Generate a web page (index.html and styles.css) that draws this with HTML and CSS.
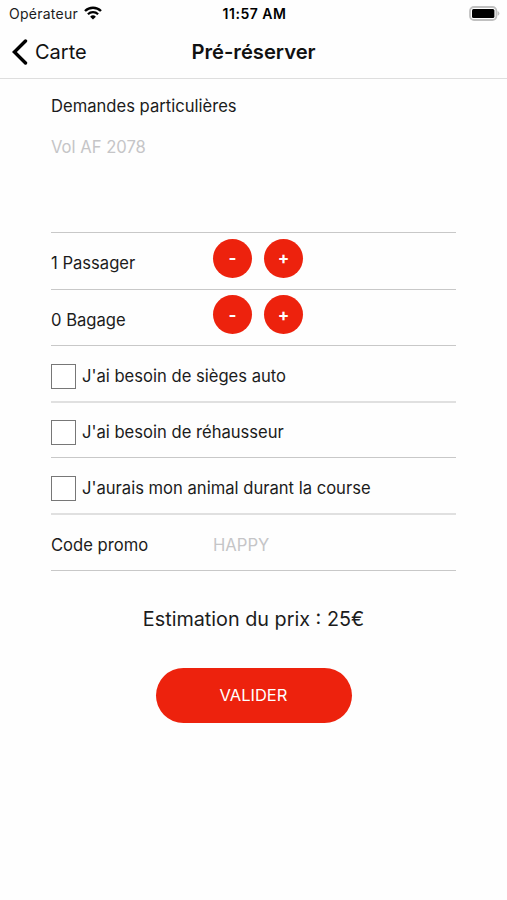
FILE: index.html
```html
<!DOCTYPE html>
<html lang="fr">
<head>
    <meta charset="UTF-8">
    <meta name="viewport" content="width=device-width, initial-scale=1.0">
    <title>Pré-réserver</title>
    <link rel="stylesheet" href="styles.css">
</head>
<body>
    <div class="status-bar">
        <div class="carrier">
            <span>Opérateur</span>
            <svg class="wifi" width="18" height="14" viewBox="0 0 18 14">
                <path d="M1 5 A11.5 11.5 0 0 1 17 5" fill="none" stroke="#000" stroke-width="2.4"/>
                <path d="M3.9 8.2 A7.3 7.3 0 0 1 14.1 8.2" fill="none" stroke="#000" stroke-width="2.2"/>
                <path d="M9 13.6 L6.1 10.7 A4.2 4.2 0 0 1 11.9 10.7 Z"/>
            </svg>
        </div>
        <span class="time">11:57 AM</span>
        <svg class="battery" width="31" height="15" viewBox="0 0 31 15">
            <rect x="1" y="1" width="26.4" height="13" rx="4" fill="#fff" stroke="#c0c0c0" stroke-width="1.8"/>
            <rect x="3" y="3" width="22.4" height="9" rx="1.5"/>
            <path d="M28.6 5 Q30.4 5.6 30.4 7.4 Q30.4 9.2 28.6 9.8 Z" fill="#c0c0c0"/>
        </svg>
    </div>
    <header class="nav-bar">
        <a class="back">
            <svg width="16" height="26" viewBox="0 0 16 26">
                <path d="M13.5 2 L2.4 13 L13.5 24" fill="none" stroke="#000" stroke-width="3.4" stroke-linecap="round"/>
            </svg>
            <span>Carte</span>
        </a>
        <h1>Pré-réserver</h1>
    </header>

    <form class="booking">
        <div class="requests">
            <label for="requests">Demandes particulières</label>
            <textarea id="requests" placeholder="Vol AF 2078"></textarea>
        </div>
        <div class="row tall">
            <span class="label">1 Passager</span>
            <div class="counter">
                <button type="button" class="round">-</button>
                <button type="button" class="round">+</button>
            </div>
        </div>
        <div class="row">
            <span class="label">0 Bagage</span>
            <div class="counter">
                <button type="button" class="round">-</button>
                <button type="button" class="round">+</button>
            </div>
        </div>
        <label class="row soft">
            <input type="checkbox">
            <span>J'ai besoin de sièges auto</span>
        </label>
        <label class="row">
            <input type="checkbox">
            <span>J'ai besoin de réhausseur</span>
        </label>
        <label class="row soft">
            <input type="checkbox">
            <span>J'aurais mon animal durant la course</span>
        </label>
        <div class="row promo">
            <label class="label" for="promo">Code promo</label>
            <input type="text" id="promo" placeholder="HAPPY">
        </div>
        <p class="estimate">Estimation du prix : 25€</p>
        <button type="button" class="submit">VALIDER</button>
    </form>
</body>
</html>
```
FILE: styles.css
```css
* {
    box-sizing: border-box;
}
body {
    font-family: Inter, sans-serif;
    font-size: 16.6px;
    background-color: #fefefe;
    color: #1c1c1c;
    margin: 0;
    height: 900px;
    overflow: hidden;
}
.status-bar {
    display: grid;
    grid-template-columns: 1fr auto 1fr;
    align-items: center;
    height: 26px;
    padding: 0 7px 0 9px;
    font-size: 14px;
}
.carrier {
    display: flex;
    align-items: center;
    gap: 6px;
    letter-spacing: 0.25px;
}
.time {
    font-weight: 600;
    color: #000;
    letter-spacing: 0.5px;
}
.battery {
    justify-self: end;
}
.nav-bar {
    display: grid;
    grid-template-columns: 1fr auto 1fr;
    align-items: center;
    height: 53px;
    padding: 0 12px 1px;
    border-bottom: 1px solid #dedede;
    color: #111;
}
.back {
    display: flex;
    align-items: center;
    gap: 7px;
    font-size: 20px;
}
h1 {
    margin: 0 0 1px;
    font-size: 20.2px;
    font-weight: 600;
}
.booking {
    width: 405px;
    margin: 0 auto;
}
.requests {
    height: 154px;
    padding-top: 17px;
    border-bottom: 1px solid #c8c8c8;
}
.requests label {
    display: block;
    line-height: 20px;
}
textarea {
    display: block;
    width: 100%;
    height: 80px;
    margin-top: 21px;
    padding: 0;
    border: none;
    outline: none;
    resize: none;
    background: transparent;
    font: inherit;
    line-height: 20px;
}
::placeholder {
    color: #c5c5c7;
    opacity: 1;
}
.row {
    display: flex;
    align-items: center;
    height: 56px;
    padding-top: 4px;
    border-bottom: 1px solid #c8c8c8;
}
.row.tall {
    height: 57px;
}
.row.soft {
    height: 57px;
    padding-top: 5px;
    border-bottom: 2px solid #e0e0e0;
}
.row.soft + .row {
    height: 55px;
}
.row.soft + .row.promo {
    height: 56px;
}
.label {
    width: 162px;
}
.counter {
    display: flex;
    gap: 12px;
    margin-top: -10px;
}
.round {
    width: 39px;
    height: 39px;
    padding: 0;
    border: none;
    border-radius: 50%;
    background-color: #ed220d;
    color: white;
    font-family: inherit;
    font-size: 17px;
    font-weight: 700;
}
input[type="checkbox"] {
    appearance: none;
    width: 25px;
    height: 25px;
    margin: 0 6px 0 0;
    border: 1px solid #777;
    background-color: white;
}
input[type="text"] {
    flex: 1;
    min-width: 0;
    padding: 0;
    border: none;
    outline: none;
    background: transparent;
    font: inherit;
}
.estimate {
    margin: 35px 0 0;
    font-size: 19.8px;
    line-height: 26px;
    text-align: center;
}
.submit {
    display: block;
    width: 196px;
    height: 55px;
    margin: 36px auto 0;
    padding: 0 0 2px;
    border: none;
    border-radius: 28px;
    background-color: #ed220d;
    color: white;
    font-family: inherit;
    font-size: 16.5px;
}
```
